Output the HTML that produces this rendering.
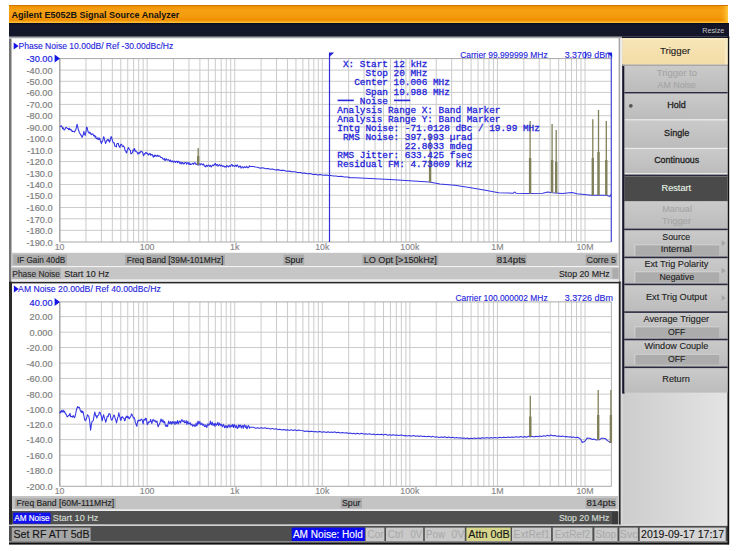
<!DOCTYPE html>
<html><head><meta charset="utf-8"><style>
html,body{margin:0;padding:0;background:#fff;width:736px;height:551px;overflow:hidden}
svg{display:block}
</style></head><body>
<svg width="736" height="551" viewBox="0 0 736 551">
<defs><linearGradient id="og" x1="0" y1="0" x2="0" y2="1"><stop offset="0" stop-color="#c06400"/><stop offset="0.08" stop-color="#f09404"/><stop offset="0.3" stop-color="#f7a014"/><stop offset="0.6" stop-color="#f59c0e"/><stop offset="0.85" stop-color="#f08e00"/><stop offset="0.93" stop-color="#f9b024"/><stop offset="1" stop-color="#ffc43c"/></linearGradient><linearGradient id="rg" x1="0" y1="0" x2="1" y2="0"><stop offset="0" stop-color="#f7a010" stop-opacity="0"/><stop offset="1" stop-color="#ffd040" stop-opacity="0.9"/></linearGradient><linearGradient id="eg" x1="0" y1="0" x2="1" y2="0"><stop offset="0" stop-color="#cdcdcd"/><stop offset="1" stop-color="#e4e4e4"/></linearGradient><linearGradient id="kg" x1="0" y1="0" x2="0" y2="1"><stop offset="0" stop-color="#cacaca"/><stop offset="1" stop-color="#bcbcbc"/></linearGradient><linearGradient id="tg" x1="0" y1="0" x2="0" y2="1"><stop offset="0" stop-color="#f8e6b8"/><stop offset="1" stop-color="#f3dca6"/></linearGradient></defs>
<rect x="9.00" y="5.00" width="719.00" height="18.00" fill="url(#og)" />
<rect x="720.00" y="6.00" width="8.00" height="16.00" fill="url(#rg)" />
<text x="11.50" y="17.70" font-family="Liberation Sans" font-size="9.5" fill="#121212" font-weight="bold" textLength="167.80" lengthAdjust="spacingAndGlyphs" style="white-space:pre">Agilent E5052B Signal Source Analyzer</text>
<rect x="9.00" y="23.00" width="720.00" height="13.40" fill="#14162a" />
<rect x="9.00" y="23.00" width="720.00" height="1.20" fill="#0c0c1c" />
<text x="702.20" y="32.60" font-family="Liberation Sans" font-size="8.0" fill="#c4c4c4" font-weight="normal" textLength="22.20" lengthAdjust="spacingAndGlyphs" style="white-space:pre">Resize</text>
<rect x="9.00" y="36.40" width="613.00" height="0.80" fill="#3a3a48" />
<rect x="9.00" y="37.20" width="613.00" height="1.00" fill="#9a9a9a" />
<rect x="9.00" y="38.20" width="613.00" height="0.80" fill="#dadada" />
<rect x="622.00" y="36.30" width="107.20" height="2.00" fill="#14162a" />
<rect x="9.00" y="38.60" width="613.00" height="243.40" fill="#ffffff" />
<rect x="9.00" y="38.60" width="2.50" height="243.40" fill="#747474" />
<rect x="618.60" y="38.00" width="1.80" height="244.00" fill="#a8a8a8" />
<rect x="620.40" y="38.00" width="1.40" height="244.00" fill="#ececec" />
<rect x="9.00" y="282.00" width="612.00" height="243.00" fill="#ffffff" />
<rect x="9.00" y="281.60" width="612.00" height="1.80" fill="#262626" />
<rect x="9.00" y="282.00" width="3.00" height="243.00" fill="#2a2a2a" />
<rect x="618.80" y="282.00" width="2.00" height="243.00" fill="#2a2a2a" />
<rect x="620.80" y="282.00" width="1.40" height="243.00" fill="#d8d8d8" />
<line x1="59.60" y1="70.10" x2="611.38" y2="70.10" stroke="#cbcbcb" stroke-width="1" />
<line x1="59.60" y1="81.30" x2="611.38" y2="81.30" stroke="#cbcbcb" stroke-width="1" />
<line x1="59.60" y1="92.40" x2="611.38" y2="92.40" stroke="#cbcbcb" stroke-width="1" />
<line x1="59.60" y1="104.40" x2="611.38" y2="104.40" stroke="#cbcbcb" stroke-width="1" />
<line x1="59.60" y1="115.70" x2="611.38" y2="115.70" stroke="#cbcbcb" stroke-width="1" />
<line x1="59.60" y1="126.90" x2="611.38" y2="126.90" stroke="#cbcbcb" stroke-width="1" />
<line x1="59.60" y1="138.60" x2="611.38" y2="138.60" stroke="#cbcbcb" stroke-width="1" />
<line x1="59.60" y1="150.40" x2="611.38" y2="150.40" stroke="#cbcbcb" stroke-width="1" />
<line x1="59.60" y1="161.50" x2="611.38" y2="161.50" stroke="#cbcbcb" stroke-width="1" />
<line x1="59.60" y1="173.10" x2="611.38" y2="173.10" stroke="#cbcbcb" stroke-width="1" />
<line x1="59.60" y1="184.50" x2="611.38" y2="184.50" stroke="#cbcbcb" stroke-width="1" />
<line x1="59.60" y1="195.30" x2="611.38" y2="195.30" stroke="#cbcbcb" stroke-width="1" />
<line x1="59.60" y1="207.50" x2="611.38" y2="207.50" stroke="#cbcbcb" stroke-width="1" />
<line x1="59.60" y1="218.80" x2="611.38" y2="218.80" stroke="#cbcbcb" stroke-width="1" />
<line x1="59.60" y1="230.30" x2="611.38" y2="230.30" stroke="#cbcbcb" stroke-width="1" />
<line x1="85.96" y1="58.60" x2="85.96" y2="242.00" stroke="#cbcbcb" stroke-width="1" />
<line x1="101.38" y1="58.60" x2="101.38" y2="242.00" stroke="#cbcbcb" stroke-width="1" />
<line x1="112.32" y1="58.60" x2="112.32" y2="242.00" stroke="#cbcbcb" stroke-width="1" />
<line x1="120.81" y1="58.60" x2="120.81" y2="242.00" stroke="#cbcbcb" stroke-width="1" />
<line x1="127.74" y1="58.60" x2="127.74" y2="242.00" stroke="#cbcbcb" stroke-width="1" />
<line x1="133.61" y1="58.60" x2="133.61" y2="242.00" stroke="#cbcbcb" stroke-width="1" />
<line x1="138.68" y1="58.60" x2="138.68" y2="242.00" stroke="#cbcbcb" stroke-width="1" />
<line x1="143.16" y1="58.60" x2="143.16" y2="242.00" stroke="#cbcbcb" stroke-width="1" />
<line x1="147.17" y1="58.60" x2="147.17" y2="242.00" stroke="#cbcbcb" stroke-width="1" />
<line x1="173.53" y1="58.60" x2="173.53" y2="242.00" stroke="#cbcbcb" stroke-width="1" />
<line x1="188.95" y1="58.60" x2="188.95" y2="242.00" stroke="#cbcbcb" stroke-width="1" />
<line x1="199.89" y1="58.60" x2="199.89" y2="242.00" stroke="#cbcbcb" stroke-width="1" />
<line x1="208.38" y1="58.60" x2="208.38" y2="242.00" stroke="#cbcbcb" stroke-width="1" />
<line x1="215.31" y1="58.60" x2="215.31" y2="242.00" stroke="#cbcbcb" stroke-width="1" />
<line x1="221.18" y1="58.60" x2="221.18" y2="242.00" stroke="#cbcbcb" stroke-width="1" />
<line x1="226.25" y1="58.60" x2="226.25" y2="242.00" stroke="#cbcbcb" stroke-width="1" />
<line x1="230.73" y1="58.60" x2="230.73" y2="242.00" stroke="#cbcbcb" stroke-width="1" />
<line x1="234.74" y1="58.60" x2="234.74" y2="242.00" stroke="#cbcbcb" stroke-width="1" />
<line x1="261.10" y1="58.60" x2="261.10" y2="242.00" stroke="#cbcbcb" stroke-width="1" />
<line x1="276.52" y1="58.60" x2="276.52" y2="242.00" stroke="#cbcbcb" stroke-width="1" />
<line x1="287.46" y1="58.60" x2="287.46" y2="242.00" stroke="#cbcbcb" stroke-width="1" />
<line x1="295.95" y1="58.60" x2="295.95" y2="242.00" stroke="#cbcbcb" stroke-width="1" />
<line x1="302.88" y1="58.60" x2="302.88" y2="242.00" stroke="#cbcbcb" stroke-width="1" />
<line x1="308.75" y1="58.60" x2="308.75" y2="242.00" stroke="#cbcbcb" stroke-width="1" />
<line x1="313.82" y1="58.60" x2="313.82" y2="242.00" stroke="#cbcbcb" stroke-width="1" />
<line x1="318.30" y1="58.60" x2="318.30" y2="242.00" stroke="#cbcbcb" stroke-width="1" />
<line x1="322.31" y1="58.60" x2="322.31" y2="242.00" stroke="#cbcbcb" stroke-width="1" />
<line x1="348.67" y1="58.60" x2="348.67" y2="242.00" stroke="#cbcbcb" stroke-width="1" />
<line x1="364.09" y1="58.60" x2="364.09" y2="242.00" stroke="#cbcbcb" stroke-width="1" />
<line x1="375.03" y1="58.60" x2="375.03" y2="242.00" stroke="#cbcbcb" stroke-width="1" />
<line x1="383.52" y1="58.60" x2="383.52" y2="242.00" stroke="#cbcbcb" stroke-width="1" />
<line x1="390.45" y1="58.60" x2="390.45" y2="242.00" stroke="#cbcbcb" stroke-width="1" />
<line x1="396.32" y1="58.60" x2="396.32" y2="242.00" stroke="#cbcbcb" stroke-width="1" />
<line x1="401.39" y1="58.60" x2="401.39" y2="242.00" stroke="#cbcbcb" stroke-width="1" />
<line x1="405.87" y1="58.60" x2="405.87" y2="242.00" stroke="#cbcbcb" stroke-width="1" />
<line x1="409.88" y1="58.60" x2="409.88" y2="242.00" stroke="#cbcbcb" stroke-width="1" />
<line x1="436.24" y1="58.60" x2="436.24" y2="242.00" stroke="#cbcbcb" stroke-width="1" />
<line x1="451.66" y1="58.60" x2="451.66" y2="242.00" stroke="#cbcbcb" stroke-width="1" />
<line x1="462.60" y1="58.60" x2="462.60" y2="242.00" stroke="#cbcbcb" stroke-width="1" />
<line x1="471.09" y1="58.60" x2="471.09" y2="242.00" stroke="#cbcbcb" stroke-width="1" />
<line x1="478.02" y1="58.60" x2="478.02" y2="242.00" stroke="#cbcbcb" stroke-width="1" />
<line x1="483.89" y1="58.60" x2="483.89" y2="242.00" stroke="#cbcbcb" stroke-width="1" />
<line x1="488.96" y1="58.60" x2="488.96" y2="242.00" stroke="#cbcbcb" stroke-width="1" />
<line x1="493.44" y1="58.60" x2="493.44" y2="242.00" stroke="#cbcbcb" stroke-width="1" />
<line x1="497.45" y1="58.60" x2="497.45" y2="242.00" stroke="#cbcbcb" stroke-width="1" />
<line x1="523.81" y1="58.60" x2="523.81" y2="242.00" stroke="#cbcbcb" stroke-width="1" />
<line x1="539.23" y1="58.60" x2="539.23" y2="242.00" stroke="#cbcbcb" stroke-width="1" />
<line x1="550.17" y1="58.60" x2="550.17" y2="242.00" stroke="#cbcbcb" stroke-width="1" />
<line x1="558.66" y1="58.60" x2="558.66" y2="242.00" stroke="#cbcbcb" stroke-width="1" />
<line x1="565.59" y1="58.60" x2="565.59" y2="242.00" stroke="#cbcbcb" stroke-width="1" />
<line x1="571.46" y1="58.60" x2="571.46" y2="242.00" stroke="#cbcbcb" stroke-width="1" />
<line x1="576.53" y1="58.60" x2="576.53" y2="242.00" stroke="#cbcbcb" stroke-width="1" />
<line x1="581.01" y1="58.60" x2="581.01" y2="242.00" stroke="#cbcbcb" stroke-width="1" />
<line x1="585.02" y1="58.60" x2="585.02" y2="242.00" stroke="#cbcbcb" stroke-width="1" />
<line x1="59.60" y1="58.60" x2="611.38" y2="58.60" stroke="#a8a8a8" stroke-width="1" />
<line x1="59.60" y1="242.00" x2="611.38" y2="242.00" stroke="#a8a8a8" stroke-width="1" />
<line x1="59.80" y1="58.60" x2="59.80" y2="242.00" stroke="#a0a0a0" stroke-width="1.4" />
<line x1="611.38" y1="58.60" x2="611.38" y2="242.00" stroke="#b0b0b0" stroke-width="1" />
<text x="52.60" y="62.30" font-family="Liberation Sans" font-size="9.2" fill="#2020e0" text-anchor="end" font-weight="normal" stroke="#2020e0" stroke-width="0.2" style="white-space:pre">-30.00</text>
<text x="52.60" y="73.80" font-family="Liberation Sans" font-size="9.2" fill="#808080" text-anchor="end" font-weight="normal" stroke="#808080" stroke-width="0.2" style="white-space:pre">-40.00</text>
<text x="52.60" y="85.00" font-family="Liberation Sans" font-size="9.2" fill="#808080" text-anchor="end" font-weight="normal" stroke="#808080" stroke-width="0.2" style="white-space:pre">-50.00</text>
<text x="52.60" y="96.10" font-family="Liberation Sans" font-size="9.2" fill="#808080" text-anchor="end" font-weight="normal" stroke="#808080" stroke-width="0.2" style="white-space:pre">-60.00</text>
<text x="52.60" y="108.10" font-family="Liberation Sans" font-size="9.2" fill="#808080" text-anchor="end" font-weight="normal" stroke="#808080" stroke-width="0.2" style="white-space:pre">-70.00</text>
<text x="52.60" y="119.40" font-family="Liberation Sans" font-size="9.2" fill="#808080" text-anchor="end" font-weight="normal" stroke="#808080" stroke-width="0.2" style="white-space:pre">-80.00</text>
<text x="52.60" y="130.60" font-family="Liberation Sans" font-size="9.2" fill="#808080" text-anchor="end" font-weight="normal" stroke="#808080" stroke-width="0.2" style="white-space:pre">-90.00</text>
<text x="52.60" y="142.30" font-family="Liberation Sans" font-size="9.2" fill="#808080" text-anchor="end" font-weight="normal" stroke="#808080" stroke-width="0.2" style="white-space:pre">-100.0</text>
<text x="52.60" y="154.10" font-family="Liberation Sans" font-size="9.2" fill="#808080" text-anchor="end" font-weight="normal" stroke="#808080" stroke-width="0.2" style="white-space:pre">-110.0</text>
<text x="52.60" y="165.20" font-family="Liberation Sans" font-size="9.2" fill="#808080" text-anchor="end" font-weight="normal" stroke="#808080" stroke-width="0.2" style="white-space:pre">-120.0</text>
<text x="52.60" y="176.80" font-family="Liberation Sans" font-size="9.2" fill="#808080" text-anchor="end" font-weight="normal" stroke="#808080" stroke-width="0.2" style="white-space:pre">-130.0</text>
<text x="52.60" y="188.20" font-family="Liberation Sans" font-size="9.2" fill="#808080" text-anchor="end" font-weight="normal" stroke="#808080" stroke-width="0.2" style="white-space:pre">-140.0</text>
<text x="52.60" y="199.00" font-family="Liberation Sans" font-size="9.2" fill="#808080" text-anchor="end" font-weight="normal" stroke="#808080" stroke-width="0.2" style="white-space:pre">-150.0</text>
<text x="52.60" y="211.20" font-family="Liberation Sans" font-size="9.2" fill="#808080" text-anchor="end" font-weight="normal" stroke="#808080" stroke-width="0.2" style="white-space:pre">-160.0</text>
<text x="52.60" y="222.50" font-family="Liberation Sans" font-size="9.2" fill="#808080" text-anchor="end" font-weight="normal" stroke="#808080" stroke-width="0.2" style="white-space:pre">-170.0</text>
<text x="52.60" y="234.00" font-family="Liberation Sans" font-size="9.2" fill="#808080" text-anchor="end" font-weight="normal" stroke="#808080" stroke-width="0.2" style="white-space:pre">-180.0</text>
<text x="52.60" y="245.70" font-family="Liberation Sans" font-size="9.2" fill="#808080" text-anchor="end" font-weight="normal" stroke="#808080" stroke-width="0.2" style="white-space:pre">-190.0</text>
<path d="M54.6,54.60 L60,58.60 L54.6,62.60 Z" fill="#1414e8"/>
<text x="59.60" y="250.40" font-family="Liberation Sans" font-size="8.8" fill="#888888" text-anchor="middle" font-weight="normal" stroke="#888888" stroke-width="0.15" style="white-space:pre">10</text>
<text x="147.17" y="250.40" font-family="Liberation Sans" font-size="8.8" fill="#888888" text-anchor="middle" font-weight="normal" stroke="#888888" stroke-width="0.15" style="white-space:pre">100</text>
<text x="234.74" y="250.40" font-family="Liberation Sans" font-size="8.8" fill="#888888" text-anchor="middle" font-weight="normal" stroke="#888888" stroke-width="0.15" style="white-space:pre">1k</text>
<text x="322.31" y="250.40" font-family="Liberation Sans" font-size="8.8" fill="#888888" text-anchor="middle" font-weight="normal" stroke="#888888" stroke-width="0.15" style="white-space:pre">10k</text>
<text x="409.88" y="250.40" font-family="Liberation Sans" font-size="8.8" fill="#888888" text-anchor="middle" font-weight="normal" stroke="#888888" stroke-width="0.15" style="white-space:pre">100k</text>
<text x="497.45" y="250.40" font-family="Liberation Sans" font-size="8.8" fill="#888888" text-anchor="middle" font-weight="normal" stroke="#888888" stroke-width="0.15" style="white-space:pre">1M</text>
<text x="585.02" y="250.40" font-family="Liberation Sans" font-size="8.8" fill="#888888" text-anchor="middle" font-weight="normal" stroke="#888888" stroke-width="0.15" style="white-space:pre">10M</text>
<line x1="59.60" y1="316.60" x2="611.38" y2="316.60" stroke="#cbcbcb" stroke-width="1" />
<line x1="59.60" y1="332.20" x2="611.38" y2="332.20" stroke="#cbcbcb" stroke-width="1" />
<line x1="59.60" y1="347.50" x2="611.38" y2="347.50" stroke="#cbcbcb" stroke-width="1" />
<line x1="59.60" y1="363.10" x2="611.38" y2="363.10" stroke="#cbcbcb" stroke-width="1" />
<line x1="59.60" y1="378.40" x2="611.38" y2="378.40" stroke="#cbcbcb" stroke-width="1" />
<line x1="59.60" y1="394.10" x2="611.38" y2="394.10" stroke="#cbcbcb" stroke-width="1" />
<line x1="59.60" y1="408.90" x2="611.38" y2="408.90" stroke="#cbcbcb" stroke-width="1" />
<line x1="59.60" y1="424.20" x2="611.38" y2="424.20" stroke="#cbcbcb" stroke-width="1" />
<line x1="59.60" y1="439.60" x2="611.38" y2="439.60" stroke="#cbcbcb" stroke-width="1" />
<line x1="59.60" y1="455.20" x2="611.38" y2="455.20" stroke="#cbcbcb" stroke-width="1" />
<line x1="59.60" y1="470.10" x2="611.38" y2="470.10" stroke="#cbcbcb" stroke-width="1" />
<line x1="85.96" y1="301.90" x2="85.96" y2="486.30" stroke="#cbcbcb" stroke-width="1" />
<line x1="101.38" y1="301.90" x2="101.38" y2="486.30" stroke="#cbcbcb" stroke-width="1" />
<line x1="112.32" y1="301.90" x2="112.32" y2="486.30" stroke="#cbcbcb" stroke-width="1" />
<line x1="120.81" y1="301.90" x2="120.81" y2="486.30" stroke="#cbcbcb" stroke-width="1" />
<line x1="127.74" y1="301.90" x2="127.74" y2="486.30" stroke="#cbcbcb" stroke-width="1" />
<line x1="133.61" y1="301.90" x2="133.61" y2="486.30" stroke="#cbcbcb" stroke-width="1" />
<line x1="138.68" y1="301.90" x2="138.68" y2="486.30" stroke="#cbcbcb" stroke-width="1" />
<line x1="143.16" y1="301.90" x2="143.16" y2="486.30" stroke="#cbcbcb" stroke-width="1" />
<line x1="147.17" y1="301.90" x2="147.17" y2="486.30" stroke="#cbcbcb" stroke-width="1" />
<line x1="173.53" y1="301.90" x2="173.53" y2="486.30" stroke="#cbcbcb" stroke-width="1" />
<line x1="188.95" y1="301.90" x2="188.95" y2="486.30" stroke="#cbcbcb" stroke-width="1" />
<line x1="199.89" y1="301.90" x2="199.89" y2="486.30" stroke="#cbcbcb" stroke-width="1" />
<line x1="208.38" y1="301.90" x2="208.38" y2="486.30" stroke="#cbcbcb" stroke-width="1" />
<line x1="215.31" y1="301.90" x2="215.31" y2="486.30" stroke="#cbcbcb" stroke-width="1" />
<line x1="221.18" y1="301.90" x2="221.18" y2="486.30" stroke="#cbcbcb" stroke-width="1" />
<line x1="226.25" y1="301.90" x2="226.25" y2="486.30" stroke="#cbcbcb" stroke-width="1" />
<line x1="230.73" y1="301.90" x2="230.73" y2="486.30" stroke="#cbcbcb" stroke-width="1" />
<line x1="234.74" y1="301.90" x2="234.74" y2="486.30" stroke="#cbcbcb" stroke-width="1" />
<line x1="261.10" y1="301.90" x2="261.10" y2="486.30" stroke="#cbcbcb" stroke-width="1" />
<line x1="276.52" y1="301.90" x2="276.52" y2="486.30" stroke="#cbcbcb" stroke-width="1" />
<line x1="287.46" y1="301.90" x2="287.46" y2="486.30" stroke="#cbcbcb" stroke-width="1" />
<line x1="295.95" y1="301.90" x2="295.95" y2="486.30" stroke="#cbcbcb" stroke-width="1" />
<line x1="302.88" y1="301.90" x2="302.88" y2="486.30" stroke="#cbcbcb" stroke-width="1" />
<line x1="308.75" y1="301.90" x2="308.75" y2="486.30" stroke="#cbcbcb" stroke-width="1" />
<line x1="313.82" y1="301.90" x2="313.82" y2="486.30" stroke="#cbcbcb" stroke-width="1" />
<line x1="318.30" y1="301.90" x2="318.30" y2="486.30" stroke="#cbcbcb" stroke-width="1" />
<line x1="322.31" y1="301.90" x2="322.31" y2="486.30" stroke="#cbcbcb" stroke-width="1" />
<line x1="348.67" y1="301.90" x2="348.67" y2="486.30" stroke="#cbcbcb" stroke-width="1" />
<line x1="364.09" y1="301.90" x2="364.09" y2="486.30" stroke="#cbcbcb" stroke-width="1" />
<line x1="375.03" y1="301.90" x2="375.03" y2="486.30" stroke="#cbcbcb" stroke-width="1" />
<line x1="383.52" y1="301.90" x2="383.52" y2="486.30" stroke="#cbcbcb" stroke-width="1" />
<line x1="390.45" y1="301.90" x2="390.45" y2="486.30" stroke="#cbcbcb" stroke-width="1" />
<line x1="396.32" y1="301.90" x2="396.32" y2="486.30" stroke="#cbcbcb" stroke-width="1" />
<line x1="401.39" y1="301.90" x2="401.39" y2="486.30" stroke="#cbcbcb" stroke-width="1" />
<line x1="405.87" y1="301.90" x2="405.87" y2="486.30" stroke="#cbcbcb" stroke-width="1" />
<line x1="409.88" y1="301.90" x2="409.88" y2="486.30" stroke="#cbcbcb" stroke-width="1" />
<line x1="436.24" y1="301.90" x2="436.24" y2="486.30" stroke="#cbcbcb" stroke-width="1" />
<line x1="451.66" y1="301.90" x2="451.66" y2="486.30" stroke="#cbcbcb" stroke-width="1" />
<line x1="462.60" y1="301.90" x2="462.60" y2="486.30" stroke="#cbcbcb" stroke-width="1" />
<line x1="471.09" y1="301.90" x2="471.09" y2="486.30" stroke="#cbcbcb" stroke-width="1" />
<line x1="478.02" y1="301.90" x2="478.02" y2="486.30" stroke="#cbcbcb" stroke-width="1" />
<line x1="483.89" y1="301.90" x2="483.89" y2="486.30" stroke="#cbcbcb" stroke-width="1" />
<line x1="488.96" y1="301.90" x2="488.96" y2="486.30" stroke="#cbcbcb" stroke-width="1" />
<line x1="493.44" y1="301.90" x2="493.44" y2="486.30" stroke="#cbcbcb" stroke-width="1" />
<line x1="497.45" y1="301.90" x2="497.45" y2="486.30" stroke="#cbcbcb" stroke-width="1" />
<line x1="523.81" y1="301.90" x2="523.81" y2="486.30" stroke="#cbcbcb" stroke-width="1" />
<line x1="539.23" y1="301.90" x2="539.23" y2="486.30" stroke="#cbcbcb" stroke-width="1" />
<line x1="550.17" y1="301.90" x2="550.17" y2="486.30" stroke="#cbcbcb" stroke-width="1" />
<line x1="558.66" y1="301.90" x2="558.66" y2="486.30" stroke="#cbcbcb" stroke-width="1" />
<line x1="565.59" y1="301.90" x2="565.59" y2="486.30" stroke="#cbcbcb" stroke-width="1" />
<line x1="571.46" y1="301.90" x2="571.46" y2="486.30" stroke="#cbcbcb" stroke-width="1" />
<line x1="576.53" y1="301.90" x2="576.53" y2="486.30" stroke="#cbcbcb" stroke-width="1" />
<line x1="581.01" y1="301.90" x2="581.01" y2="486.30" stroke="#cbcbcb" stroke-width="1" />
<line x1="585.02" y1="301.90" x2="585.02" y2="486.30" stroke="#cbcbcb" stroke-width="1" />
<line x1="59.60" y1="301.90" x2="611.38" y2="301.90" stroke="#a8a8a8" stroke-width="1" />
<line x1="59.60" y1="486.30" x2="611.38" y2="486.30" stroke="#a8a8a8" stroke-width="1" />
<line x1="59.80" y1="301.90" x2="59.80" y2="486.30" stroke="#a0a0a0" stroke-width="1.4" />
<line x1="611.38" y1="301.90" x2="611.38" y2="486.30" stroke="#b0b0b0" stroke-width="1" />
<text x="52.60" y="305.60" font-family="Liberation Sans" font-size="9.2" fill="#2020e0" text-anchor="end" font-weight="normal" stroke="#2020e0" stroke-width="0.2" style="white-space:pre">40.00</text>
<text x="52.60" y="320.30" font-family="Liberation Sans" font-size="9.2" fill="#808080" text-anchor="end" font-weight="normal" stroke="#808080" stroke-width="0.2" style="white-space:pre">20.00</text>
<text x="52.60" y="335.90" font-family="Liberation Sans" font-size="9.2" fill="#808080" text-anchor="end" font-weight="normal" stroke="#808080" stroke-width="0.2" style="white-space:pre">0.000</text>
<text x="52.60" y="351.20" font-family="Liberation Sans" font-size="9.2" fill="#808080" text-anchor="end" font-weight="normal" stroke="#808080" stroke-width="0.2" style="white-space:pre">-20.00</text>
<text x="52.60" y="366.80" font-family="Liberation Sans" font-size="9.2" fill="#808080" text-anchor="end" font-weight="normal" stroke="#808080" stroke-width="0.2" style="white-space:pre">-40.00</text>
<text x="52.60" y="382.10" font-family="Liberation Sans" font-size="9.2" fill="#808080" text-anchor="end" font-weight="normal" stroke="#808080" stroke-width="0.2" style="white-space:pre">-60.00</text>
<text x="52.60" y="397.80" font-family="Liberation Sans" font-size="9.2" fill="#808080" text-anchor="end" font-weight="normal" stroke="#808080" stroke-width="0.2" style="white-space:pre">-80.00</text>
<text x="52.60" y="412.60" font-family="Liberation Sans" font-size="9.2" fill="#808080" text-anchor="end" font-weight="normal" stroke="#808080" stroke-width="0.2" style="white-space:pre">-100.0</text>
<text x="52.60" y="427.90" font-family="Liberation Sans" font-size="9.2" fill="#808080" text-anchor="end" font-weight="normal" stroke="#808080" stroke-width="0.2" style="white-space:pre">-120.0</text>
<text x="52.60" y="443.30" font-family="Liberation Sans" font-size="9.2" fill="#808080" text-anchor="end" font-weight="normal" stroke="#808080" stroke-width="0.2" style="white-space:pre">-140.0</text>
<text x="52.60" y="458.90" font-family="Liberation Sans" font-size="9.2" fill="#808080" text-anchor="end" font-weight="normal" stroke="#808080" stroke-width="0.2" style="white-space:pre">-160.0</text>
<text x="52.60" y="473.80" font-family="Liberation Sans" font-size="9.2" fill="#808080" text-anchor="end" font-weight="normal" stroke="#808080" stroke-width="0.2" style="white-space:pre">-180.0</text>
<text x="52.60" y="490.00" font-family="Liberation Sans" font-size="9.2" fill="#808080" text-anchor="end" font-weight="normal" stroke="#808080" stroke-width="0.2" style="white-space:pre">-200.0</text>
<path d="M54.6,297.90 L60,301.90 L54.6,305.90 Z" fill="#1414e8"/>
<text x="59.60" y="493.80" font-family="Liberation Sans" font-size="8.8" fill="#888888" text-anchor="middle" font-weight="normal" stroke="#888888" stroke-width="0.15" style="white-space:pre">10</text>
<text x="147.17" y="493.80" font-family="Liberation Sans" font-size="8.8" fill="#888888" text-anchor="middle" font-weight="normal" stroke="#888888" stroke-width="0.15" style="white-space:pre">100</text>
<text x="234.74" y="493.80" font-family="Liberation Sans" font-size="8.8" fill="#888888" text-anchor="middle" font-weight="normal" stroke="#888888" stroke-width="0.15" style="white-space:pre">1k</text>
<text x="322.31" y="493.80" font-family="Liberation Sans" font-size="8.8" fill="#888888" text-anchor="middle" font-weight="normal" stroke="#888888" stroke-width="0.15" style="white-space:pre">10k</text>
<text x="409.88" y="493.80" font-family="Liberation Sans" font-size="8.8" fill="#888888" text-anchor="middle" font-weight="normal" stroke="#888888" stroke-width="0.15" style="white-space:pre">100k</text>
<text x="497.45" y="493.80" font-family="Liberation Sans" font-size="8.8" fill="#888888" text-anchor="middle" font-weight="normal" stroke="#888888" stroke-width="0.15" style="white-space:pre">1M</text>
<text x="585.02" y="493.80" font-family="Liberation Sans" font-size="8.8" fill="#888888" text-anchor="middle" font-weight="normal" stroke="#888888" stroke-width="0.15" style="white-space:pre">10M</text>
<path d="M13.7,42.6 L18.6,46.1 L13.7,49.6 Z" fill="#1414e8"/>
<text x="18.50" y="48.80" font-family="Liberation Sans" font-size="8.8" fill="#2222dc" font-weight="normal" textLength="154.80" lengthAdjust="spacingAndGlyphs" stroke="#2222dc" stroke-width="0.12" style="white-space:pre">Phase Noise 10.00dB/ Ref -30.00dBc/Hz</text>
<text x="460.20" y="57.60" font-family="Liberation Sans" font-size="8.8" fill="#2222dc" font-weight="normal" textLength="87.40" lengthAdjust="spacingAndGlyphs" stroke="#2222dc" stroke-width="0.12" style="white-space:pre">Carrier 99.999999 MHz</text>
<text x="564.70" y="57.60" font-family="Liberation Sans" font-size="8.8" fill="#2222dc" font-weight="normal" textLength="47.80" lengthAdjust="spacingAndGlyphs" stroke="#2222dc" stroke-width="0.12" style="white-space:pre">3.3709 dBm</text>
<path d="M13.9,285.6 L18.8,289.1 L13.9,292.6 Z" fill="#1414e8"/>
<text x="18.10" y="291.80" font-family="Liberation Sans" font-size="8.8" fill="#2222dc" font-weight="normal" textLength="142.70" lengthAdjust="spacingAndGlyphs" stroke="#2222dc" stroke-width="0.12" style="white-space:pre">AM Noise 20.00dB/ Ref 40.00dBc/Hz</text>
<text x="455.50" y="301.00" font-family="Liberation Sans" font-size="8.8" fill="#2222dc" font-weight="normal" textLength="92.10" lengthAdjust="spacingAndGlyphs" stroke="#2222dc" stroke-width="0.12" style="white-space:pre">Carrier 100.000002 MHz</text>
<text x="564.70" y="301.00" font-family="Liberation Sans" font-size="8.8" fill="#2222dc" font-weight="normal" textLength="48.20" lengthAdjust="spacingAndGlyphs" stroke="#2222dc" stroke-width="0.12" style="white-space:pre">3.3726 dBm</text>
<polyline points="59.80,126.50 60.38,126.52 60.95,126.03 61.52,125.74 62.10,127.20 62.62,128.68 63.15,127.75 63.68,129.23 64.20,130.00 64.73,129.75 65.27,128.48 65.80,127.50 66.40,127.32 67.00,128.10 67.60,128.47 68.20,128.60 68.76,129.66 69.32,128.22 69.88,129.72 70.44,129.23 71.00,130.20 71.54,129.90 72.08,131.47 72.62,131.06 73.16,131.48 73.70,131.60 74.20,131.88 74.70,131.87 75.20,130.25 75.70,130.00 76.40,127.39 77.10,124.20 77.75,127.11 78.40,130.00 78.93,131.21 79.45,132.85 79.97,133.40 80.50,134.70 81.00,135.29 81.50,135.64 82.00,137.35 82.50,136.70 83.20,134.52 83.90,131.30 84.55,134.33 85.20,135.40 85.90,132.35 86.60,127.00 87.10,127.62 87.60,129.65 88.10,131.90 88.60,132.00 89.14,133.42 89.68,132.14 90.22,132.64 90.76,134.01 91.30,134.70 91.87,133.71 92.43,134.26 93.00,133.94 93.57,135.61 94.13,136.02 94.70,135.40 95.22,137.28 95.75,136.20 96.28,138.51 96.80,138.80 97.34,139.08 97.88,137.59 98.42,139.38 98.96,139.46 99.50,138.10 100.00,138.72 100.50,141.98 101.00,141.89 101.50,143.50 102.03,141.77 102.55,141.37 103.07,139.26 103.60,136.70 104.10,137.52 104.60,139.92 105.10,141.84 105.60,143.50 106.10,142.08 106.60,140.71 107.10,140.03 107.60,139.50 108.12,140.75 108.65,139.60 109.17,141.67 109.70,142.20 110.35,139.30 111.00,136.70 111.53,136.82 112.05,139.01 112.57,141.15 113.10,142.20 113.64,143.05 114.18,142.71 114.72,145.92 115.26,146.23 115.80,146.30 116.30,146.83 116.80,143.87 117.30,143.59 117.80,143.50 118.33,143.33 118.85,146.28 119.38,145.98 119.90,147.60 120.55,144.94 121.20,144.20 121.74,144.54 122.28,146.35 122.82,146.65 123.36,145.73 123.90,146.90 124.46,147.21 125.02,150.43 125.58,150.74 126.14,152.30 126.70,153.00 127.37,150.13 128.03,148.25 128.70,147.60 129.24,149.31 129.78,149.85 130.32,150.15 130.86,153.62 131.40,153.70 131.94,153.11 132.48,152.60 133.02,149.80 133.56,150.87 134.10,149.00 134.62,148.55 135.15,151.29 135.67,150.90 136.20,151.70 136.74,151.68 137.28,152.64 137.82,154.01 138.36,152.70 138.90,153.70 139.44,152.34 139.98,152.97 140.52,151.82 141.06,151.08 141.60,151.70 142.10,151.84 142.60,152.58 143.10,154.00 143.60,155.80 144.12,154.46 144.65,153.59 145.17,153.92 145.70,152.40 146.24,152.39 146.78,153.48 147.32,153.18 147.86,154.16 148.40,155.10 148.94,153.71 149.48,154.17 150.02,153.42 150.56,155.15 151.10,154.40 151.64,154.93 152.18,154.39 152.72,155.53 153.26,157.13 153.80,156.40 154.32,155.07 154.83,156.62 155.35,155.30 155.87,155.17 156.69,156.42 157.19,155.78 157.70,155.17 158.25,156.51 158.80,156.11 159.33,155.82 159.86,156.10 160.69,157.56 161.35,157.50 162.01,157.41 162.92,159.11 163.62,159.20 164.32,158.31 164.83,160.56 165.35,160.30 166.15,158.65 167.11,160.23 167.96,159.57 168.61,159.82 169.27,160.89 169.85,161.34 170.42,160.06 170.93,161.41 171.44,161.70 172.25,160.84 173.16,162.14 173.68,161.96 174.21,161.06 174.79,161.50 175.36,162.44 176.33,161.17 176.95,161.57 177.56,162.76 178.14,161.17 178.71,161.90 179.39,161.84 180.06,163.70 181.02,162.13 181.87,163.92 182.50,162.37 183.14,163.05 183.68,164.01 184.23,163.71 184.84,162.46 185.44,162.48 186.02,162.53 186.59,164.33 187.57,162.72 188.15,162.44 188.73,164.32 189.26,164.46 189.80,162.82 190.50,164.58 191.19,164.40 191.80,164.31 192.40,163.34 193.02,163.27 193.63,164.34 194.35,162.87 195.06,162.73 196.02,164.57 196.62,163.84 197.23,164.18 197.77,164.63 198.30,165.30 199.15,164.36 199.79,163.71 200.43,164.83 201.36,163.68 202.03,164.14 202.71,164.88 203.24,163.90 203.77,164.15 204.45,166.33 205.13,166.11 205.80,166.85 206.47,165.14 206.99,165.94 207.51,166.49 208.19,165.15 208.86,165.14 209.73,166.37 210.66,165.31 211.20,167.00 211.75,166.27 212.69,165.08 213.21,164.91 213.74,165.74 214.31,164.49 214.88,163.99 215.49,163.54 216.11,165.68 216.70,164.73 217.28,164.39 218.09,166.20 218.73,165.29 219.37,164.52 220.02,165.35 220.67,166.17 221.19,165.04 221.70,165.47 222.30,165.98 222.89,166.47 223.71,165.88 224.58,167.07 225.39,166.43 226.26,167.23 226.76,165.48 227.27,166.30 227.94,166.05 228.62,167.02 229.48,165.61 230.48,166.40 231.33,164.75 232.05,164.49 232.76,166.36 233.30,165.67 233.85,165.50 234.69,166.49 235.63,165.17 236.51,166.46 237.21,164.92 237.91,165.77 238.77,167.34 239.56,166.19 240.27,165.92 240.98,168.14 241.59,167.09 242.21,167.07 242.71,166.79 243.22,167.91 243.86,167.50 244.50,166.65 245.14,167.24 245.78,167.69 246.70,166.17 247.41,167.61 248.12,167.74 248.77,167.18 249.42,165.80 250.00,166.60 253.53,166.49 255.32,167.09 257.49,167.17 260.28,168.14 262.70,167.78 265.93,168.83 268.23,168.60 270.32,169.15 272.37,168.98 275.47,169.91 277.94,169.63 280.89,170.39 283.63,170.28 286.56,171.26 289.03,171.13 291.96,171.84 294.91,171.70 297.25,172.56 300.42,172.50 302.43,173.19 304.41,172.98 307.37,173.76 310.36,173.58 313.09,174.40 315.66,174.33 317.44,175.00 320.16,174.61 323.31,175.26 326.37,174.94 328.43,175.54 330.62,175.41 333.25,175.99 335.63,175.91 338.75,176.53 341.18,176.32 344.29,177.07 347.42,176.93 349.97,177.63 350.00,177.40 390.00,179.50 429.30,182.10 440.00,183.90 454.70,185.20 469.30,187.60 484.00,190.00 498.70,192.70 513.40,193.20 514.60,192.00 516.00,193.20 528.00,193.50 542.70,193.20 547.60,192.00 552.50,192.70 562.30,193.50 572.10,192.50 577.00,193.70 591.60,195.20 606.30,195.20 610.00,196.40 611.20,193.90" fill="none" stroke="#3434e4" stroke-width="1.05" stroke-linejoin="round"/>
<line x1="198.20" y1="147.90" x2="198.20" y2="164.60" stroke="#80805a" stroke-width="1.3" />
<line x1="198.20" y1="156.00" x2="198.20" y2="164.60" stroke="#80805a" stroke-width="2.4" />
<line x1="430.10" y1="133.20" x2="430.10" y2="182.23" stroke="#80805a" stroke-width="1.3" />
<line x1="430.10" y1="160.00" x2="430.10" y2="182.23" stroke="#80805a" stroke-width="2.4" />
<line x1="530.10" y1="120.90" x2="530.10" y2="193.46" stroke="#80805a" stroke-width="1.3" />
<line x1="530.10" y1="158.00" x2="530.10" y2="193.46" stroke="#80805a" stroke-width="2.4" />
<line x1="552.10" y1="124.00" x2="552.10" y2="192.64" stroke="#80805a" stroke-width="1.3" />
<line x1="552.10" y1="160.00" x2="552.10" y2="192.64" stroke="#80805a" stroke-width="2.4" />
<line x1="556.20" y1="130.00" x2="556.20" y2="193.00" stroke="#80805a" stroke-width="1.3" />
<line x1="556.20" y1="162.00" x2="556.20" y2="193.00" stroke="#80805a" stroke-width="2.4" />
<line x1="592.80" y1="119.30" x2="592.80" y2="195.20" stroke="#80805a" stroke-width="1.3" />
<line x1="592.80" y1="158.00" x2="592.80" y2="195.20" stroke="#80805a" stroke-width="2.4" />
<line x1="598.50" y1="110.00" x2="598.50" y2="195.20" stroke="#80805a" stroke-width="1.3" />
<line x1="598.50" y1="152.00" x2="598.50" y2="195.20" stroke="#80805a" stroke-width="2.4" />
<line x1="606.30" y1="120.90" x2="606.30" y2="195.20" stroke="#80805a" stroke-width="1.3" />
<line x1="606.30" y1="160.00" x2="606.30" y2="195.20" stroke="#80805a" stroke-width="2.4" />
<polyline points="59.80,413.30 60.33,411.52 60.87,412.63 61.40,410.60 61.92,411.17 62.45,411.83 62.98,410.04 63.50,411.00 64.00,412.32 64.50,411.15 65.00,412.80 65.50,413.30 66.00,414.50 66.50,414.64 67.00,416.82 67.50,416.70 68.03,416.17 68.55,415.56 69.07,415.67 69.60,414.00 70.10,413.65 70.60,416.63 71.10,416.36 71.60,416.70 72.12,416.28 72.65,417.17 73.17,415.64 73.70,416.10 74.35,417.68 75.00,416.70 75.70,413.55 76.40,410.00 77.05,407.89 77.70,406.50 78.22,407.71 78.75,407.40 79.28,407.23 79.80,408.60 80.45,410.93 81.10,412.00 81.62,410.83 82.15,412.83 82.67,411.36 83.20,412.00 83.85,415.76 84.50,418.80 85.20,420.71 85.90,420.10 86.43,418.52 86.97,416.93 87.50,414.70 88.10,415.58 88.70,416.14 89.30,418.80 89.95,423.34 90.60,430.30 91.30,424.99 92.00,421.50 92.70,421.10 93.40,420.10 94.05,415.87 94.70,412.00 95.22,413.56 95.75,416.08 96.28,415.62 96.80,418.10 97.45,416.04 98.10,415.40 98.62,415.12 99.15,412.81 99.67,412.08 100.20,412.70 100.70,414.35 101.20,415.73 101.70,418.40 102.20,420.80 102.90,417.03 103.60,414.70 104.10,416.79 104.60,418.68 105.10,419.56 105.60,422.20 106.10,421.00 106.60,419.08 107.10,416.68 107.60,416.10 108.12,416.71 108.65,414.38 109.17,413.61 109.70,414.00 110.20,414.47 110.70,417.41 111.20,419.54 111.70,420.10 112.24,419.89 112.78,417.97 113.32,416.67 113.86,415.07 114.40,415.40 114.93,417.65 115.45,419.31 115.97,420.64 116.50,422.90 117.08,420.73 117.65,417.65 118.22,416.39 118.80,412.70 119.37,415.77 119.93,416.98 120.50,420.10 121.03,420.30 121.55,417.21 122.07,417.63 122.60,416.70 123.10,417.48 123.60,418.07 124.10,418.63 124.60,420.80 125.12,420.35 125.65,417.18 126.17,417.41 126.70,416.10 127.24,417.79 127.78,416.25 128.32,416.94 128.86,418.54 129.40,418.80 129.90,417.62 130.40,416.77 130.90,416.01 131.40,414.00 131.90,414.18 132.40,415.55 132.90,416.56 133.40,418.10 134.10,417.63 134.80,419.50 135.30,422.21 135.80,423.64 136.30,425.16 136.80,426.30 137.50,421.92 138.20,420.10 138.70,421.00 139.21,420.76 139.71,420.04 140.21,420.77 140.72,420.02 141.22,419.44 141.72,419.14 142.23,420.17 143.12,423.92 143.91,419.52 144.46,419.22 145.00,420.31 145.60,418.15 146.20,418.39 146.74,421.07 147.28,424.60 147.87,423.89 148.46,421.88 148.97,422.34 149.48,421.80 150.08,421.52 150.68,419.44 151.28,422.00 151.87,423.47 152.49,420.80 153.11,419.35 153.67,420.45 154.23,421.28 154.95,420.16 155.86,422.26 156.46,421.50 157.06,421.08 157.60,424.67 158.14,426.76 158.69,425.58 159.25,424.29 159.95,423.08 160.52,420.44 161.10,419.03 161.61,420.90 162.12,422.02 162.86,419.71 163.71,422.78 164.57,421.43 165.39,425.65 166.04,426.51 166.68,424.95 167.61,426.48 168.16,423.04 168.72,421.07 169.25,423.34 169.79,423.63 170.54,421.63 171.39,424.18 172.27,421.50 172.98,423.62 173.84,421.69 174.40,421.90 174.95,424.62 175.83,421.61 176.81,423.74 177.58,420.54 178.40,423.90 179.03,421.83 179.66,421.01 180.64,422.93 181.28,420.61 181.92,419.67 182.78,421.54 183.41,421.65 184.05,420.49 184.57,422.72 185.09,422.64 185.60,422.24 186.11,420.56 186.89,424.40 187.39,422.36 187.89,421.22 188.45,423.64 189.02,424.09 189.63,422.97 190.25,422.75 190.97,425.09 191.96,424.12 192.84,426.35 193.75,424.84 194.35,425.00 194.96,426.52 195.53,425.87 196.11,423.11 196.88,425.82 197.44,423.81 198.01,421.13 198.88,424.02 199.82,421.42 200.34,423.60 200.87,424.77 201.83,423.17 202.55,425.17 203.15,425.07 203.76,424.11 204.39,426.59 205.02,426.58 205.88,424.85 206.69,427.57 207.33,425.54 207.96,423.67 208.56,425.26 209.15,425.07 209.77,423.60 210.40,421.10 210.91,423.90 211.43,424.83 212.16,422.03 213.13,425.50 213.67,424.28 214.22,423.38 214.94,426.41 215.72,423.37 216.63,425.30 217.20,424.31 217.77,422.17 218.63,425.62 219.51,423.09 220.44,425.43 221.24,424.12 221.86,425.66 222.48,426.82 223.32,424.23 223.97,425.53 224.61,427.83 225.40,425.81 226.15,427.60 226.91,425.62 227.76,427.76 228.38,425.51 228.99,424.75 229.94,427.36 230.45,426.54 230.96,425.08 231.86,426.79 232.73,424.38 233.50,427.56 234.04,425.04 234.58,424.72 235.41,427.46 236.26,425.52 237.23,428.54 237.83,427.82 238.44,424.97 239.15,427.31 239.71,425.20 240.27,424.94 241.26,428.05 241.96,425.61 242.59,425.76 243.21,428.37 243.82,425.58 244.43,424.84 245.28,427.43 246.07,425.53 246.62,428.25 247.18,428.73 247.74,426.76 248.31,425.60 248.89,426.03 249.47,428.32 250.00,427.20 253.34,427.34 255.84,428.14 257.61,427.72 259.31,428.24 261.55,427.73 263.03,428.20 265.13,427.80 266.80,428.55 268.21,428.14 270.17,429.01 272.34,428.38 274.31,429.20 276.01,428.73 278.25,429.62 279.68,429.24 281.89,429.99 283.60,429.46 286.11,430.12 287.55,429.74 289.45,430.39 291.09,429.70 293.38,430.45 295.02,429.77 296.80,430.65 298.47,430.10 300.79,430.60 303.33,430.68 304.95,431.52 306.85,431.03 309.39,431.63 311.26,431.30 313.83,431.76 315.29,431.47 317.17,432.10 319.63,431.41 322.22,432.32 324.02,431.78 326.54,432.42 327.98,431.75 329.84,432.40 331.63,432.02 333.04,432.47 334.86,431.86 336.41,432.78 338.06,432.15 340.44,432.89 342.36,432.43 344.33,432.92 346.83,432.72 348.67,433.55 350.11,433.04 352.48,433.78 353.93,433.31 355.40,433.94 357.11,433.22 359.59,433.93 361.32,433.32 363.46,434.06 365.72,433.70 367.45,434.14 369.75,433.67 371.92,434.62 373.34,434.03 375.31,434.76 377.86,434.17 379.56,434.76 381.55,434.15 383.17,435.03 385.46,434.34 387.79,435.15 389.58,434.66 391.41,435.35 392.91,434.84 395.21,435.34 396.69,435.04 398.75,435.51 401.33,434.97 403.91,435.71 405.42,435.39 407.41,436.00 409.35,435.52 411.25,436.14 413.46,435.54 415.88,436.36 417.42,435.68 419.17,436.47 421.02,435.87 422.66,436.52 424.35,436.20 426.82,436.81 428.61,436.31 431.20,436.98 432.88,436.36 435.06,437.30 436.58,436.63 438.97,437.42 441.46,436.98 443.22,437.38 444.84,436.83 446.94,437.79 448.79,437.04 450.73,437.75 453.06,437.20 454.59,438.02 456.73,437.58 458.57,438.05 460.22,437.72 462.34,438.37 463.98,437.96 465.78,438.52 467.40,438.01 469.04,438.70 471.10,438.24 472.62,438.61 474.68,437.96 476.19,438.44 478.43,437.93 480.17,438.38 482.71,437.84 484.79,438.26 486.69,437.55 489.28,438.14 490.92,437.48 492.57,437.93 495.05,437.46 497.43,437.92 499.89,437.31 501.49,437.69 503.55,437.15 506.04,437.58 508.19,437.11 510.19,437.48 511.93,436.95 514.44,437.35 516.43,436.74 518.99,437.24 520.54,436.56 523.11,437.19 524.58,436.43 526.44,437.21 528.59,436.33 530.18,437.05 531.85,436.35 534.26,436.92 535.88,436.27 537.76,436.71 539.62,436.10 541.32,436.51 543.80,435.81 545.87,436.17 547.32,435.28 548.86,435.89 550.92,435.07 552.68,435.81 554.78,435.46 556.97,436.19 558.90,435.93 561.04,436.55 562.73,436.03 565.06,436.88 566.68,436.43 568.21,437.00 570.12,436.79 572.05,437.39 573.50,436.85 575.00,437.66 577.33,437.16 578.80,437.85 580.65,439.15 582.22,442.47 584.81,441.25 587.19,438.10 589.77,438.19 592.31,439.47 593.91,439.02 596.43,440.12 598.25,439.52 599.84,439.67 601.57,438.15 603.14,438.20 605.65,438.80 607.36,440.66 609.15,441.65 610.40,442.80" fill="none" stroke="#3434e4" stroke-width="1.05" stroke-linejoin="round"/>
<line x1="530.30" y1="395.80" x2="530.30" y2="436.66" stroke="#80805a" stroke-width="1.3" />
<line x1="530.30" y1="416.50" x2="530.30" y2="436.66" stroke="#80805a" stroke-width="2.4" />
<line x1="598.20" y1="390.10" x2="598.20" y2="439.92" stroke="#80805a" stroke-width="1.3" />
<line x1="598.20" y1="415.00" x2="598.20" y2="439.92" stroke="#80805a" stroke-width="2.4" />
<line x1="610.90" y1="390.10" x2="610.90" y2="442.80" stroke="#80805a" stroke-width="1.3" />
<line x1="610.90" y1="415.00" x2="610.90" y2="442.80" stroke="#80805a" stroke-width="2.4" />
<line x1="329.50" y1="54.00" x2="329.50" y2="242.00" stroke="#3030d8" stroke-width="1.2" />
<path d="M329,52.6 L334.2,52.6 L329,57.2 Z" fill="#2020d8"/>
<line x1="611.30" y1="54.00" x2="611.30" y2="242.00" stroke="#5050e0" stroke-width="1.2" />
<path d="M612,52.6 L606.8,52.6 L612,57.2 Z" fill="#2020d8"/>
<line x1="585.40" y1="51.50" x2="585.40" y2="58.60" stroke="#3030d8" stroke-width="1.1" />
<text x="337.30" y="67.20" font-family="Liberation Mono" font-size="9.4" fill="#2424d8" text-anchor="start" font-weight="normal" stroke="#2424d8" stroke-width="0.3" style="white-space:pre"> X: Start 12 kHz</text>
<text x="337.30" y="76.30" font-family="Liberation Mono" font-size="9.4" fill="#2424d8" text-anchor="start" font-weight="normal" stroke="#2424d8" stroke-width="0.3" style="white-space:pre">     Stop 20 MHz</text>
<text x="337.30" y="85.40" font-family="Liberation Mono" font-size="9.4" fill="#2424d8" text-anchor="start" font-weight="normal" stroke="#2424d8" stroke-width="0.3" style="white-space:pre">   Center 10.006 MHz</text>
<text x="337.30" y="94.50" font-family="Liberation Mono" font-size="9.4" fill="#2424d8" text-anchor="start" font-weight="normal" stroke="#2424d8" stroke-width="0.3" style="white-space:pre">     Span 19.988 MHz</text>
<text x="337.30" y="103.60" font-family="Liberation Mono" font-size="9.4" fill="#2424d8" text-anchor="start" font-weight="normal" stroke="#2424d8" stroke-width="0.3" style="white-space:pre">    Noise</text>
<text x="337.30" y="112.70" font-family="Liberation Mono" font-size="9.4" fill="#2424d8" text-anchor="start" font-weight="normal" stroke="#2424d8" stroke-width="0.3" style="white-space:pre">Analysis Range X: Band Marker</text>
<text x="337.30" y="121.80" font-family="Liberation Mono" font-size="9.4" fill="#2424d8" text-anchor="start" font-weight="normal" stroke="#2424d8" stroke-width="0.3" style="white-space:pre">Analysis Range Y: Band Marker</text>
<text x="337.30" y="130.90" font-family="Liberation Mono" font-size="9.4" fill="#2424d8" text-anchor="start" font-weight="normal" stroke="#2424d8" stroke-width="0.3" style="white-space:pre">Intg Noise: -71.0128 dBc / 19.99 MHz</text>
<text x="337.30" y="140.00" font-family="Liberation Mono" font-size="9.4" fill="#2424d8" text-anchor="start" font-weight="normal" stroke="#2424d8" stroke-width="0.3" style="white-space:pre"> RMS Noise: 397.993 µrad</text>
<text x="337.30" y="149.10" font-family="Liberation Mono" font-size="9.4" fill="#2424d8" text-anchor="start" font-weight="normal" stroke="#2424d8" stroke-width="0.3" style="white-space:pre">            22.8033 mdeg</text>
<text x="337.30" y="158.20" font-family="Liberation Mono" font-size="9.4" fill="#2424d8" text-anchor="start" font-weight="normal" stroke="#2424d8" stroke-width="0.3" style="white-space:pre">RMS Jitter: 633.425 fsec</text>
<text x="337.30" y="167.30" font-family="Liberation Mono" font-size="9.4" fill="#2424d8" text-anchor="start" font-weight="normal" stroke="#2424d8" stroke-width="0.3" style="white-space:pre">Residual FM: 4.73009 kHz</text>
<rect x="337.60" y="99.60" width="16.20" height="1.60" fill="#2a2ad8" />
<rect x="394.00" y="99.60" width="16.20" height="1.60" fill="#2a2ad8" />
<rect x="11.50" y="252.80" width="607.10" height="13.20" fill="#c4c4c4" />
<rect x="11.50" y="266.00" width="607.10" height="1.10" fill="#f2f2f2" />
<rect x="11.50" y="267.10" width="607.10" height="12.50" fill="#c6c6c6" />
<rect x="11.50" y="279.60" width="607.10" height="2.00" fill="#ececec" />
<rect x="13.20" y="254.60" width="53.80" height="10.40" fill="#ababab" />
<text x="16.90" y="262.60" font-family="Liberation Sans" font-size="8.7" fill="#1e1e1e" font-weight="normal" textLength="48.30" lengthAdjust="spacingAndGlyphs" stroke="#1e1e1e" stroke-width="0.12" style="white-space:pre">IF Gain 40dB</text>
<rect x="125.00" y="254.60" width="100.00" height="10.40" fill="#ababab" />
<text x="126.80" y="262.60" font-family="Liberation Sans" font-size="8.7" fill="#1e1e1e" font-weight="normal" textLength="96.50" lengthAdjust="spacingAndGlyphs" stroke="#1e1e1e" stroke-width="0.12" style="white-space:pre">Freq Band [39M-101MHz]</text>
<rect x="283.50" y="254.60" width="20.70" height="10.40" fill="#ababab" />
<text x="284.70" y="262.60" font-family="Liberation Sans" font-size="8.7" fill="#1e1e1e" font-weight="normal" textLength="18.80" lengthAdjust="spacingAndGlyphs" stroke="#1e1e1e" stroke-width="0.12" style="white-space:pre">Spur</text>
<rect x="362.40" y="254.60" width="75.90" height="10.40" fill="#ababab" />
<text x="363.70" y="262.60" font-family="Liberation Sans" font-size="8.7" fill="#1e1e1e" font-weight="normal" textLength="73.10" lengthAdjust="spacingAndGlyphs" stroke="#1e1e1e" stroke-width="0.12" style="white-space:pre">LO Opt [&gt;150kHz]</text>
<rect x="495.90" y="254.60" width="30.60" height="10.40" fill="#ababab" />
<text x="496.80" y="262.60" font-family="Liberation Sans" font-size="8.7" fill="#1e1e1e" font-weight="normal" textLength="28.90" lengthAdjust="spacingAndGlyphs" stroke="#1e1e1e" stroke-width="0.12" style="white-space:pre">814pts</text>
<rect x="585.60" y="254.60" width="31.40" height="10.40" fill="#ababab" />
<text x="586.50" y="262.60" font-family="Liberation Sans" font-size="8.7" fill="#1e1e1e" font-weight="normal" textLength="29.50" lengthAdjust="spacingAndGlyphs" stroke="#1e1e1e" stroke-width="0.12" style="white-space:pre">Corre 5</text>
<rect x="12.20" y="268.20" width="48.80" height="10.60" fill="#b0b0b0" />
<text x="12.30" y="277.30" font-family="Liberation Sans" font-size="8.7" fill="#2a2a2a" font-weight="normal" textLength="47.70" lengthAdjust="spacingAndGlyphs" stroke="#2a2a2a" stroke-width="0.12" style="white-space:pre">Phase Noise</text>
<text x="64.20" y="277.30" font-family="Liberation Sans" font-size="8.7" fill="#1e1e1e" font-weight="normal" textLength="45.00" lengthAdjust="spacingAndGlyphs" stroke="#1e1e1e" stroke-width="0.12" style="white-space:pre">Start 10 Hz</text>
<text x="559.00" y="277.30" font-family="Liberation Sans" font-size="8.7" fill="#1e1e1e" font-weight="normal" textLength="50.70" lengthAdjust="spacingAndGlyphs" stroke="#1e1e1e" stroke-width="0.12" style="white-space:pre">Stop 20 MHz</text>
<rect x="612.30" y="268.20" width="6.30" height="10.60" fill="#acacac" />
<rect x="12.00" y="496.00" width="606.20" height="13.60" fill="#c4c4c4" />
<rect x="14.80" y="498.20" width="101.10" height="10.20" fill="#ababab" />
<text x="16.50" y="506.40" font-family="Liberation Sans" font-size="8.7" fill="#1e1e1e" font-weight="normal" textLength="97.60" lengthAdjust="spacingAndGlyphs" stroke="#1e1e1e" stroke-width="0.12" style="white-space:pre">Freq Band [60M-111MHz]</text>
<rect x="340.80" y="498.20" width="21.20" height="10.20" fill="#ababab" />
<text x="342.00" y="506.40" font-family="Liberation Sans" font-size="8.7" fill="#1e1e1e" font-weight="normal" textLength="18.50" lengthAdjust="spacingAndGlyphs" stroke="#1e1e1e" stroke-width="0.12" style="white-space:pre">Spur</text>
<rect x="585.60" y="498.20" width="30.50" height="10.20" fill="#ababab" />
<text x="586.50" y="506.40" font-family="Liberation Sans" font-size="8.7" fill="#1e1e1e" font-weight="normal" textLength="29.00" lengthAdjust="spacingAndGlyphs" stroke="#1e1e1e" stroke-width="0.12" style="white-space:pre">814pts</text>
<rect x="12.00" y="509.60" width="606.20" height="1.40" fill="#ececec" />
<rect x="12.00" y="511.00" width="606.20" height="13.60" fill="#505050" />
<rect x="13.20" y="512.60" width="37.40" height="11.00" fill="#1212f0" />
<text x="14.30" y="521.40" font-family="Liberation Sans" font-size="8.7" fill="#ffffff" font-weight="normal" textLength="35.20" lengthAdjust="spacingAndGlyphs" stroke="#ffffff" stroke-width="0.15" style="white-space:pre">AM Noise</text>
<text x="52.80" y="521.40" font-family="Liberation Sans" font-size="8.7" fill="#d4ddd4" font-weight="normal" textLength="45.60" lengthAdjust="spacingAndGlyphs" stroke="#d4ddd4" stroke-width="0.15" style="white-space:pre">Start 10 Hz</text>
<text x="559.00" y="521.40" font-family="Liberation Sans" font-size="8.7" fill="#d4ddd4" font-weight="normal" textLength="50.30" lengthAdjust="spacingAndGlyphs" stroke="#d4ddd4" stroke-width="0.15" style="white-space:pre">Stop 20 MHz</text>
<rect x="612.00" y="512.20" width="6.20" height="12.00" fill="#3a3a3a" />
<rect x="9.00" y="524.60" width="720.00" height="1.40" fill="#d0d0d0" />
<rect x="9.00" y="526.00" width="720.00" height="15.50" fill="#4e4e4e" />
<rect x="9.00" y="541.00" width="720.00" height="1.40" fill="#8c8c8c" />
<rect x="9.00" y="542.40" width="720.00" height="2.20" fill="#101010" />
<rect x="11.80" y="527.60" width="78.80" height="13.40" fill="#a6a6a6" />
<text x="13.50" y="538.40" font-family="Liberation Sans" font-size="10" fill="#151515" font-weight="normal" textLength="76.00" lengthAdjust="spacingAndGlyphs" stroke="#151515" stroke-width="0.12" style="white-space:pre">Set RF ATT 5dB</text>
<rect x="291.70" y="527.60" width="73.10" height="13.40" fill="#0a0af0" />
<text x="292.90" y="538.40" font-family="Liberation Sans" font-size="10" fill="#ffffff" font-weight="normal" textLength="69.90" lengthAdjust="spacingAndGlyphs" stroke="#ffffff" stroke-width="0.12" style="white-space:pre">AM Noise: Hold</text>
<rect x="365.60" y="527.60" width="18.80" height="13.40" fill="#c9c9c9" />
<text x="367.50" y="538.40" font-family="Liberation Sans" font-size="10" fill="#a9a9a9" font-weight="normal" textLength="16.00" lengthAdjust="spacingAndGlyphs" stroke="#a9a9a9" stroke-width="0.08" style="white-space:pre">Cor</text>
<rect x="386.00" y="527.60" width="37.20" height="13.40" fill="#c9c9c9" />
<text x="387.70" y="538.40" font-family="Liberation Sans" font-size="10" fill="#a9a9a9" font-weight="normal" textLength="15.60" lengthAdjust="spacingAndGlyphs" stroke="#a9a9a9" stroke-width="0.08" style="white-space:pre">Ctrl</text>
<text x="410.50" y="538.40" font-family="Liberation Sans" font-size="10" fill="#a9a9a9" font-weight="normal" textLength="11.60" lengthAdjust="spacingAndGlyphs" stroke="#a9a9a9" stroke-width="0.08" style="white-space:pre">0V</text>
<rect x="424.80" y="527.60" width="40.00" height="13.40" fill="#c9c9c9" />
<text x="426.00" y="538.40" font-family="Liberation Sans" font-size="10" fill="#a9a9a9" font-weight="normal" textLength="18.90" lengthAdjust="spacingAndGlyphs" stroke="#a9a9a9" stroke-width="0.08" style="white-space:pre">Pow</text>
<text x="451.20" y="538.40" font-family="Liberation Sans" font-size="10" fill="#a9a9a9" font-weight="normal" textLength="13.30" lengthAdjust="spacingAndGlyphs" stroke="#a9a9a9" stroke-width="0.08" style="white-space:pre">0V</text>
<rect x="466.40" y="527.60" width="44.20" height="13.40" fill="#d6d68c" />
<text x="468.20" y="538.40" font-family="Liberation Sans" font-size="10" fill="#151515" font-weight="normal" textLength="41.40" lengthAdjust="spacingAndGlyphs" stroke="#151515" stroke-width="0.12" style="white-space:pre">Attn 0dB</text>
<rect x="512.00" y="527.60" width="39.10" height="13.40" fill="#c9c9c9" />
<text x="513.60" y="538.40" font-family="Liberation Sans" font-size="10" fill="#a9a9a9" font-weight="normal" textLength="36.40" lengthAdjust="spacingAndGlyphs" stroke="#a9a9a9" stroke-width="0.08" style="white-space:pre">ExtRef1</text>
<rect x="552.80" y="527.60" width="39.60" height="13.40" fill="#c9c9c9" />
<text x="554.70" y="538.40" font-family="Liberation Sans" font-size="10" fill="#a9a9a9" font-weight="normal" textLength="35.60" lengthAdjust="spacingAndGlyphs" stroke="#a9a9a9" stroke-width="0.08" style="white-space:pre">ExtRef2</text>
<rect x="594.40" y="527.60" width="23.10" height="13.40" fill="#c9c9c9" />
<text x="595.50" y="538.40" font-family="Liberation Sans" font-size="10" fill="#a9a9a9" font-weight="normal" textLength="20.70" lengthAdjust="spacingAndGlyphs" stroke="#a9a9a9" stroke-width="0.08" style="white-space:pre">Stop</text>
<rect x="619.40" y="527.60" width="18.50" height="13.40" fill="#c9c9c9" />
<text x="619.80" y="538.40" font-family="Liberation Sans" font-size="10" fill="#a9a9a9" font-weight="normal" textLength="17.70" lengthAdjust="spacingAndGlyphs" stroke="#a9a9a9" stroke-width="0.08" style="white-space:pre">Svc</text>
<rect x="639.70" y="527.60" width="86.00" height="13.40" fill="#d4d4d4" />
<text x="641.10" y="538.40" font-family="Liberation Sans" font-size="10" fill="#151515" font-weight="normal" textLength="82.90" lengthAdjust="spacingAndGlyphs" stroke="#151515" stroke-width="0.12" style="white-space:pre">2019-09-17 17:17</text>
<rect x="622.20" y="38.00" width="105.40" height="486.60" fill="url(#eg)" />
<rect x="622.20" y="64.60" width="2.40" height="329.00" fill="#16162a" />
<rect x="727.50" y="36.30" width="1.70" height="508.00" fill="#101010" />
<rect x="622.40" y="38.20" width="105.10" height="26.40" fill="url(#tg)" />
<rect x="622.40" y="38.30" width="105.10" height="1.20" fill="#fbf0c8" />
<rect x="724.80" y="38.30" width="2.70" height="26.30" fill="#f8ebc4" />
<text x="659.90" y="54.30" font-family="Liberation Sans" font-size="9" fill="#1e1e1e" font-weight="normal" textLength="30.40" lengthAdjust="spacingAndGlyphs" stroke="#1e1e1e" stroke-width="0.12" style="white-space:pre">Trigger</text>
<rect x="622.40" y="64.60" width="105.10" height="1.40" fill="#a8a8a8" />
<rect x="624.50" y="66.00" width="103.00" height="25.40" fill="url(#kg)" />
<rect x="624.50" y="93.20" width="103.00" height="26.10" fill="url(#kg)" />
<circle cx="630.8" cy="105.8" r="1.9" fill="#555555"/>
<rect x="624.50" y="120.30" width="103.00" height="27.60" fill="url(#kg)" />
<rect x="624.50" y="148.90" width="103.00" height="24.30" fill="url(#kg)" />
<rect x="624.50" y="176.40" width="103.00" height="25.00" fill="#4a4a4a" />
<rect x="624.50" y="201.40" width="103.00" height="27.20" fill="url(#kg)" />
<rect x="624.50" y="230.20" width="103.00" height="26.60" fill="url(#kg)" />
<path d="M721.7,240.3 L725.8,243.3 L721.7,246.3 Z" fill="#a6a6a6"/>
<rect x="624.50" y="258.00" width="103.00" height="25.80" fill="url(#kg)" />
<path d="M721.7,267.7 L725.8,270.7 L721.7,273.7 Z" fill="#a6a6a6"/>
<rect x="624.50" y="285.00" width="103.00" height="26.50" fill="url(#kg)" />
<path d="M721.7,295.1 L725.8,298.1 L721.7,301.1 Z" fill="#a6a6a6"/>
<rect x="624.50" y="312.80" width="103.00" height="26.00" fill="url(#kg)" />
<rect x="624.50" y="340.20" width="103.00" height="26.40" fill="url(#kg)" />
<rect x="624.50" y="368.00" width="103.00" height="24.60" fill="url(#kg)" />
<rect x="634.30" y="244.30" width="84.90" height="11.50" fill="#d2d2d2" />
<rect x="635.30" y="245.30" width="83.90" height="10.50" fill="#acacac" />
<rect x="634.30" y="271.30" width="84.90" height="11.40" fill="#d2d2d2" />
<rect x="635.30" y="272.30" width="83.90" height="10.40" fill="#acacac" />
<rect x="634.30" y="326.30" width="84.90" height="11.50" fill="#d2d2d2" />
<rect x="635.30" y="327.30" width="83.90" height="10.50" fill="#acacac" />
<rect x="634.30" y="353.80" width="84.90" height="10.90" fill="#d2d2d2" />
<rect x="635.30" y="354.80" width="83.90" height="9.90" fill="#acacac" />
<rect x="624.50" y="91.40" width="103.00" height="1.00" fill="#eeeeee" />
<rect x="624.50" y="119.30" width="103.00" height="1.00" fill="#eeeeee" />
<rect x="624.50" y="147.90" width="103.00" height="1.00" fill="#eeeeee" />
<rect x="624.50" y="173.20" width="103.00" height="1.00" fill="#eeeeee" />
<rect x="624.50" y="91.80" width="103.00" height="1.60" fill="#2a2a3e" />
<rect x="624.50" y="174.60" width="103.00" height="1.60" fill="#2a2a3e" />
<rect x="624.50" y="228.60" width="103.00" height="1.60" fill="#2a2a3e" />
<rect x="624.50" y="256.60" width="103.00" height="1.60" fill="#2a2a3e" />
<rect x="624.50" y="283.60" width="103.00" height="1.60" fill="#2a2a3e" />
<rect x="624.50" y="311.30" width="103.00" height="1.60" fill="#2a2a3e" />
<rect x="624.50" y="338.70" width="103.00" height="1.60" fill="#2a2a3e" />
<rect x="624.50" y="366.50" width="103.00" height="1.60" fill="#2a2a3e" />
<text x="656.70" y="75.60" font-family="Liberation Sans" font-size="9" fill="#a4a4a4" font-weight="normal" textLength="40.30" lengthAdjust="spacingAndGlyphs" stroke="#a4a4a4" stroke-width="0.1" style="white-space:pre">Trigger to</text>
<text x="657.50" y="88.10" font-family="Liberation Sans" font-size="9" fill="#a4a4a4" font-weight="normal" textLength="38.40" lengthAdjust="spacingAndGlyphs" stroke="#a4a4a4" stroke-width="0.1" style="white-space:pre">AM Noise</text>
<text x="667.30" y="108.30" font-family="Liberation Sans" font-size="9" fill="#222222" font-weight="normal" textLength="18.60" lengthAdjust="spacingAndGlyphs" stroke="#222222" stroke-width="0.28" style="white-space:pre">Hold</text>
<text x="664.10" y="135.50" font-family="Liberation Sans" font-size="9" fill="#222222" font-weight="normal" textLength="25.20" lengthAdjust="spacingAndGlyphs" stroke="#222222" stroke-width="0.28" style="white-space:pre">Single</text>
<text x="654.20" y="162.60" font-family="Liberation Sans" font-size="9" fill="#222222" font-weight="normal" textLength="45.10" lengthAdjust="spacingAndGlyphs" stroke="#222222" stroke-width="0.28" style="white-space:pre">Continuous</text>
<text x="661.50" y="190.80" font-family="Liberation Sans" font-size="9" fill="#e2f0e2" font-weight="normal" textLength="29.60" lengthAdjust="spacingAndGlyphs" stroke="#e2f0e2" stroke-width="0.15" style="white-space:pre">Restart</text>
<text x="662.30" y="212.30" font-family="Liberation Sans" font-size="9" fill="#a4a4a4" font-weight="normal" textLength="29.60" lengthAdjust="spacingAndGlyphs" stroke="#a4a4a4" stroke-width="0.1" style="white-space:pre">Manual</text>
<text x="662.00" y="224.20" font-family="Liberation Sans" font-size="9" fill="#a4a4a4" font-weight="normal" textLength="29.10" lengthAdjust="spacingAndGlyphs" stroke="#a4a4a4" stroke-width="0.1" style="white-space:pre">Trigger</text>
<text x="662.30" y="239.80" font-family="Liberation Sans" font-size="9" fill="#222222" font-weight="normal" textLength="28.00" lengthAdjust="spacingAndGlyphs" stroke="#222222" stroke-width="0.12" style="white-space:pre">Source</text>
<text x="660.70" y="252.20" font-family="Liberation Sans" font-size="9" fill="#222222" font-weight="normal" textLength="31.20" lengthAdjust="spacingAndGlyphs" stroke="#222222" stroke-width="0.12" style="white-space:pre">Internal</text>
<text x="644.40" y="267.20" font-family="Liberation Sans" font-size="9" fill="#222222" font-weight="normal" textLength="63.90" lengthAdjust="spacingAndGlyphs" stroke="#222222" stroke-width="0.12" style="white-space:pre">Ext Trig Polarity</text>
<text x="659.40" y="279.50" font-family="Liberation Sans" font-size="9" fill="#222222" font-weight="normal" textLength="34.70" lengthAdjust="spacingAndGlyphs" stroke="#222222" stroke-width="0.12" style="white-space:pre">Negative</text>
<text x="646.00" y="299.90" font-family="Liberation Sans" font-size="9" fill="#222222" font-weight="normal" textLength="61.10" lengthAdjust="spacingAndGlyphs" stroke="#222222" stroke-width="0.12" style="white-space:pre">Ext Trig Output</text>
<text x="643.50" y="321.80" font-family="Liberation Sans" font-size="9" fill="#222222" font-weight="normal" textLength="65.60" lengthAdjust="spacingAndGlyphs" stroke="#222222" stroke-width="0.12" style="white-space:pre">Average Trigger</text>
<text x="668.10" y="334.50" font-family="Liberation Sans" font-size="9" fill="#222222" font-weight="normal" textLength="17.30" lengthAdjust="spacingAndGlyphs" stroke="#222222" stroke-width="0.12" style="white-space:pre">OFF</text>
<text x="644.40" y="349.20" font-family="Liberation Sans" font-size="9" fill="#222222" font-weight="normal" textLength="63.90" lengthAdjust="spacingAndGlyphs" stroke="#222222" stroke-width="0.12" style="white-space:pre">Window Couple</text>
<text x="668.10" y="362.00" font-family="Liberation Sans" font-size="9" fill="#222222" font-weight="normal" textLength="17.30" lengthAdjust="spacingAndGlyphs" stroke="#222222" stroke-width="0.12" style="white-space:pre">OFF</text>
<text x="662.30" y="381.90" font-family="Liberation Sans" font-size="9" fill="#222222" font-weight="normal" textLength="27.50" lengthAdjust="spacingAndGlyphs" stroke="#222222" stroke-width="0.12" style="white-space:pre">Return</text>
</svg>
</body></html>
